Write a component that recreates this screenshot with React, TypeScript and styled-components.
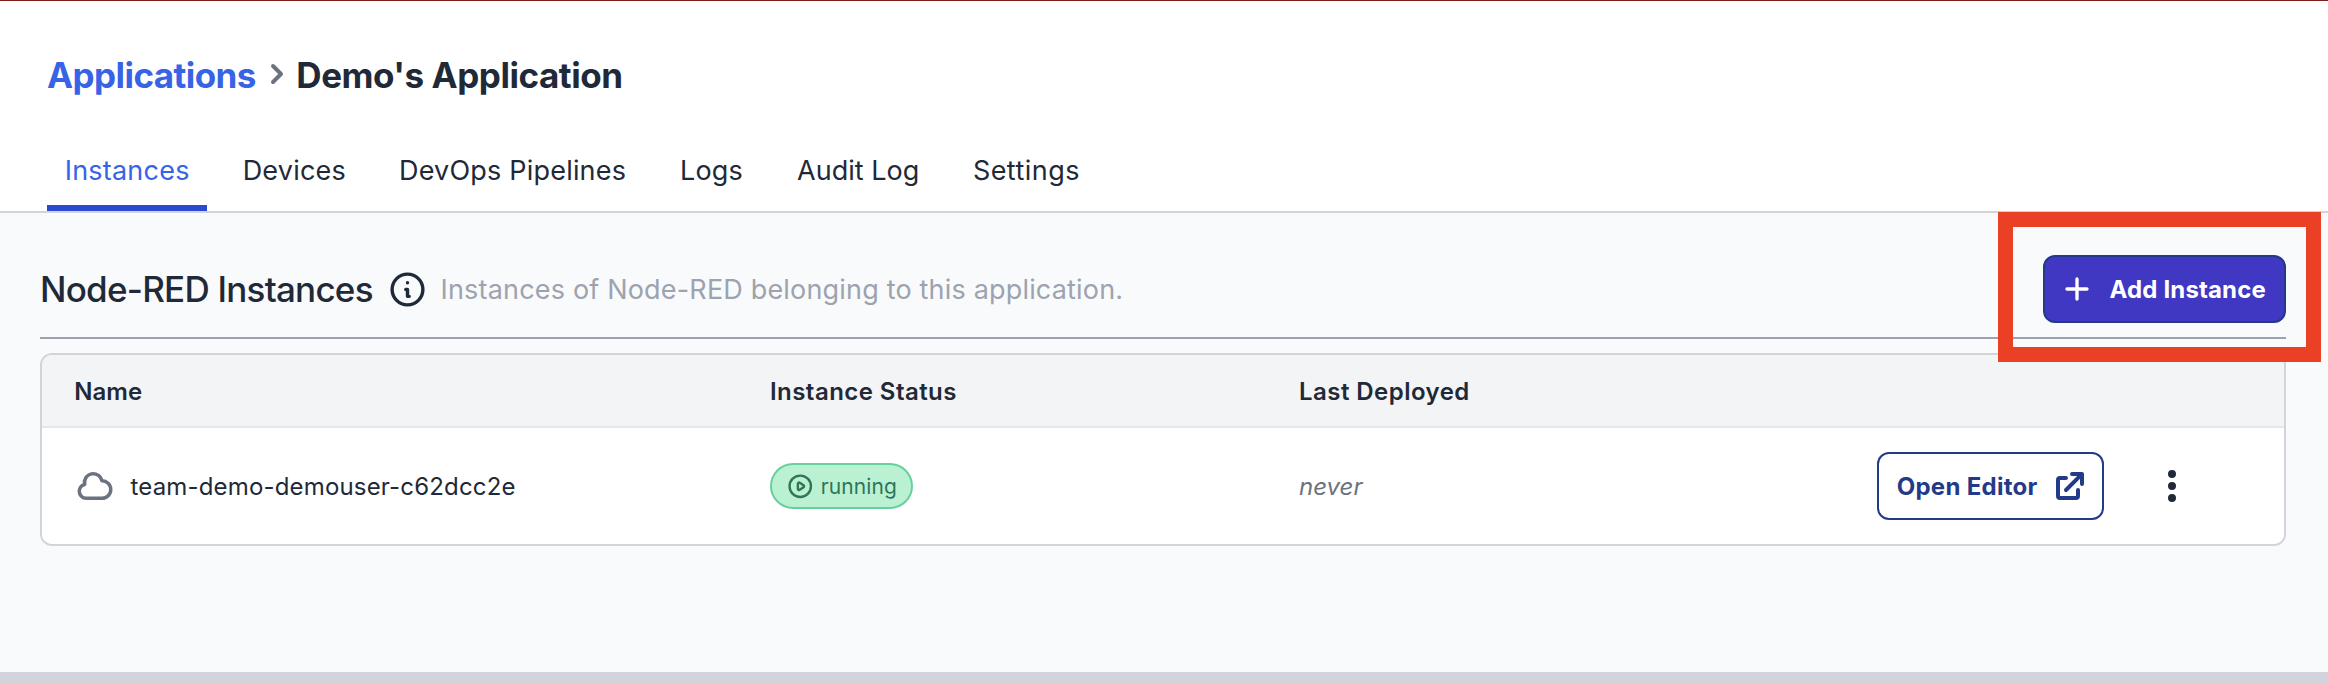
import React from "react";
import styled, { createGlobalStyle } from "styled-components";

const GlobalStyle = createGlobalStyle`
  * { box-sizing: border-box; }
  body {
    margin: 0;
    background: #f9fafc;
    color: #1f2937;
    font-family: Inter, "Liberation Sans", sans-serif;
    font-size: 24px;
  }
  button { font: inherit; cursor: pointer; }
  svg { display: block; flex: none; }
`;

const Page = styled.div`
  position: relative;
  height: 684px;
  display: flex;
  flex-direction: column;
  overflow: hidden;
`;

const Header = styled.header`
  height: 213px;
  background: #ffffff;
  border-top: 1px solid #7f1d1d;
  border-bottom: 2px solid #d1d5db;
`;

const Breadcrumb = styled.nav`
  display: flex;
  align-items: center;
  height: 135px;
  padding: 12px 0 0 47px;
  font-size: 35px;
  font-weight: 700;
  white-space: nowrap;
`;

const CrumbLink = styled.a`
  color: #3763e6;
  letter-spacing: -0.57px;
`;

const CrumbSeparator = styled.span`
  display: flex;
  width: 39px;
  margin: 0 0.5px 1px 1px;
  color: #6b7280;
`;

const CrumbCurrent = styled.span`
  letter-spacing: -0.45px;
`;

const Tabs = styled.nav`
  display: flex;
  gap: 18px;
  height: 75px;
  padding-left: 47px;
`;

const Tab = styled.a<{ $width: number; $spacing: number; $active?: boolean }>`
  display: flex;
  align-items: center;
  width: ${(p) => p.$width}px;
  padding-left: 17.7px;
  font-size: 27px;
  letter-spacing: ${(p) => p.$spacing}px;
  white-space: nowrap;
  color: ${(p) => (p.$active ? "#3763e6" : "#1f2937")};
  border-bottom: 6px solid ${(p) => (p.$active ? "#2a4ad0" : "transparent")};
`;

const Content = styled.main`
  flex: 1;
  padding: 42px 42px 0 40px;
`;

const SectionHeader = styled.div`
  display: flex;
  align-items: center;
  height: 84px;
  padding-bottom: 14px;
  border-bottom: 2px solid #9ca3af;
  white-space: nowrap;
`;

const SectionTitle = styled.h2`
  margin: 0 14.3px 0 0;
  font-size: 35px;
  font-weight: 500;
  letter-spacing: -0.76px;
`;

const SectionHint = styled.span`
  flex: 1;
  margin-left: 12.5px;
  font-size: 27px;
  letter-spacing: 0.18px;
  color: #9ca3af;
`;

const Button = styled.button<{ $primary?: boolean }>`
  display: flex;
  align-items: center;
  gap: 12.5px;
  width: ${(p) => (p.$primary ? 243 : 227)}px;
  height: 68px;
  padding: 0 0 0 ${(p) => (p.$primary ? 12 : 17.7)}px;
  border: 2px solid #233a88;
  border-radius: 12px;
  background: ${(p) => (p.$primary ? "#4037c2" : "#ffffff")};
  color: ${(p) => (p.$primary ? "#ffffff" : "#233a88")};
  font-weight: 700;
  letter-spacing: ${(p) => (p.$primary ? 0.15 : 0.28)}px;
  white-space: nowrap;
`;

const Table = styled.div`
  margin-top: 14px;
  border: 2px solid #d1d5db;
  border-radius: 12px;
  background: #ffffff;
  overflow: hidden;
`;

const Row = styled.div<{ $head?: boolean }>`
  display: grid;
  grid-template-columns: 728px 529px 578px 1fr;
  align-items: center;
  height: ${(p) => (p.$head ? 73 : 116)}px;
  padding-top: ${(p) => (p.$head ? 2 : 0)}px;
  background: ${(p) => (p.$head ? "#f3f4f6" : "#ffffff")};
  border-bottom: ${(p) => (p.$head ? "2px solid #e5e7eb" : "none")};
  font-weight: ${(p) => (p.$head ? 600 : 400)};
`;

const HeadCell = styled.span<{ $spacing?: number }>`
  letter-spacing: ${(p) => p.$spacing ?? 0}px;
  &:first-child { padding-left: 32.3px; }
`;

const NameCell = styled.div`
  display: flex;
  align-items: center;
  gap: 14.5px;
  padding-left: 32px;
  letter-spacing: 0.17px;
  svg { color: #6b7280; }
`;

const StatusBadge = styled.span`
  display: flex;
  align-items: center;
  gap: 6.5px;
  width: 143px;
  height: 46px;
  padding-left: 13.8px;
  border: 2px solid #68d09c;
  border-radius: 23px;
  background: #b9f1d2;
  color: #2f7557;
  font-size: 21px;
  letter-spacing: 0.08px;
`;

const Deployed = styled.em`
  color: #6b7280;
`;

const ActionsCell = styled.div`
  display: flex;
  align-items: center;
`;

const MenuButton = styled.button`
  margin-left: 48px;
  padding: 0;
  border: 0;
  background: none;
  color: #1f2937;
`;

const Highlight = styled.div`
  position: absolute;
  top: 212px;
  right: 7px;
  width: 323.5px;
  height: 150px;
  border: 15px solid #ea4025;
  pointer-events: none;
`;

const Footer = styled.footer`
  height: 12px;
  background: #d1d5db;
`;

type IconProps = { size: number; d: string[] };

const OutlineIcon = ({ size, d }: IconProps) => (
  <svg width={size} height={size} viewBox="0 0 24 24" fill="none" stroke="currentColor" strokeWidth={2} strokeLinecap="round" strokeLinejoin="round">
    {d.map((path) => <path key={path} d={path} />)}
  </svg>
);

const SolidIcon = ({ size, d }: IconProps) => (
  <svg width={size} height={size} viewBox="0 0 20 20" fill="currentColor" fillRule="evenodd">
    {d.map((path) => <path key={path} d={path} />)}
  </svg>
);

const icons = {
  chevron: ["M7.293 14.707a1 1 0 010-1.414L10.586 10 7.293 6.707a1 1 0 011.414-1.414l4 4a1 1 0 010 1.414l-4 4a1 1 0 01-1.414 0z"],
  info: ["M13 16h-1v-4h-1m1-4h.01M21 12a9 9 0 11-18 0 9 9 0 0118 0z"],
  plus: ["M12 6v6m0 0v6m0-6h6m-6 0H6"],
  cloud: ["M3 15a4 4 0 004 4h9a5 5 0 10-.1-9.999 5.002 5.002 0 10-9.78 2.096A4.001 4.001 0 003 15z"],
  play: [
    "M14.752 11.168l-3.197-2.132A1 1 0 0010 9.87v4.263a1 1 0 001.555.832l3.197-2.132a1 1 0 000-1.664z",
    "M21 12a9 9 0 11-18 0 9 9 0 0118 0z",
  ],
  external: [
    "M11 3a1 1 0 100 2h2.586l-6.293 6.293a1 1 0 101.414 1.414L15 6.414V9a1 1 0 102 0V4a1 1 0 00-1-1h-5z",
    "M5 5a2 2 0 00-2 2v8a2 2 0 002 2h8a2 2 0 002-2v-3a1 1 0 10-2 0v3H5V7h3a1 1 0 000-2H5z",
  ],
  dots: ["M10 6a2 2 0 110-4 2 2 0 010 4zM10 12a2 2 0 110-4 2 2 0 010 4zM10 18a2 2 0 110-4 2 2 0 010 4z"],
};

const tabs = [
  { label: "Instances", width: 160, spacing: 0.22, active: true },
  { label: "Devices", width: 138.3, spacing: 0.2 },
  { label: "DevOps Pipelines", width: 263.1, spacing: 0.2 },
  { label: "Logs", width: 99, spacing: 0.1 },
  { label: "Audit Log", width: 157.8, spacing: 0 },
  { label: "Settings", width: 140, spacing: 0.45 },
];

export default function App() {
  return (
    <Page>
      <GlobalStyle />
      <Header>
        <Breadcrumb>
          <CrumbLink>Applications</CrumbLink>
          <CrumbSeparator><SolidIcon size={40} d={icons.chevron} /></CrumbSeparator>
          <CrumbCurrent>Demo's Application</CrumbCurrent>
        </Breadcrumb>
        <Tabs>
          {tabs.map((tab) => (
            <Tab key={tab.label} $width={tab.width} $spacing={tab.spacing} $active={tab.active}>{tab.label}</Tab>
          ))}
        </Tabs>
      </Header>
      <Content>
        <SectionHeader>
          <SectionTitle>Node-RED Instances</SectionTitle>
          <OutlineIcon size={41} d={icons.info} />
          <SectionHint>Instances of Node-RED belonging to this application.</SectionHint>
          <Button $primary>
            <OutlineIcon size={40} d={icons.plus} />
            Add Instance
          </Button>
        </SectionHeader>
        <Table>
          <Row $head>
            <HeadCell>Name</HeadCell>
            <HeadCell $spacing={0.45}>Instance Status</HeadCell>
            <HeadCell $spacing={0.45}>Last Deployed</HeadCell>
          </Row>
          <Row>
            <NameCell>
              <OutlineIcon size={42} d={icons.cloud} />
              team-demo-demouser-c62dcc2e
            </NameCell>
            <StatusBadge>
              <OutlineIcon size={28.5} d={icons.play} />
              running
            </StatusBadge>
            <Deployed>never</Deployed>
            <ActionsCell>
              <Button>
                Open Editor
                <SolidIcon size={40} d={icons.external} />
              </Button>
              <MenuButton aria-label="Instance actions">
                <SolidIcon size={40} d={icons.dots} />
              </MenuButton>
            </ActionsCell>
          </Row>
        </Table>
      </Content>
      <Footer />
      <Highlight />
    </Page>
  );
}
